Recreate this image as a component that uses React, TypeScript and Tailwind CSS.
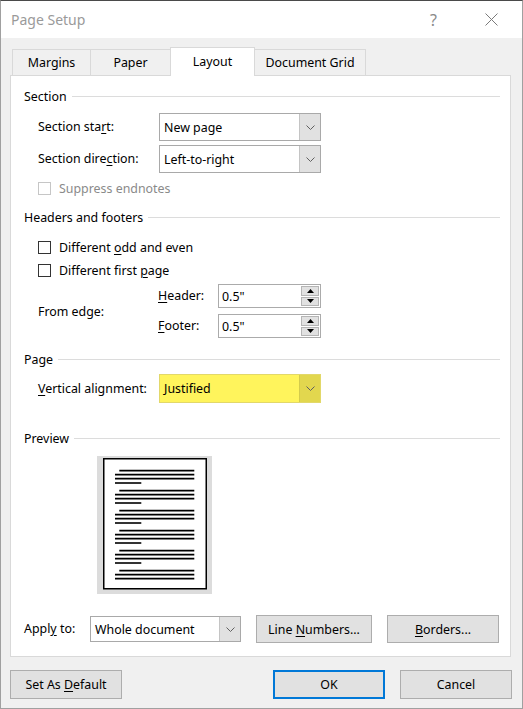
// Page Setup dialog — Layout tab, Word-style classic dialog.

import type { ReactNode } from "react";

function Mn({ children }: { children: ReactNode }) {
  return <span className="underline underline-offset-[2px] decoration-[1px]">{children}</span>;
}

function GroupHeader({ title, className = "" }: { title: string; className?: string }) {
  return (
    <div className={`flex h-[16px] items-center gap-[5px] ${className}`}>
      <span className="pt-[1px] leading-[16px]">{title}</span>
      <div className="h-px flex-1 bg-[#dcdcdc]" />
    </div>
  );
}

function Chevron() {
  return (
    <svg width="9" height="5" viewBox="0 0 9 5" fill="none">
      <polyline points="0.5,0.5 4.5,4.5 8.5,0.5" stroke="#606060" strokeWidth="1" />
    </svg>
  );
}

function Combo({
  value,
  className = "",
  yellow = false,
}: {
  value: string;
  className?: string;
  yellow?: boolean;
}) {
  return (
    <div
      className={`flex border ${
        yellow ? "border-[#e2d86a] bg-[#fff45c]" : "border-[#a9a9a9] bg-white"
      } ${className}`}
    >
      <div className="flex flex-1 items-center pl-[4px] pt-[1px] leading-[16px]">{value}</div>
      <div
        className={`flex w-[21px] items-center justify-center border-l ${
          yellow ? "border-[#d4cb4c] bg-[#e2d74e]" : "border-[#c4c4c4] bg-[#e1e1e1]"
        }`}
      >
        <Chevron />
      </div>
    </div>
  );
}

function Checkbox({ label, disabled = false }: { label: ReactNode; disabled?: boolean }) {
  return (
    <div className="flex h-[16px] items-center pl-[14px]">
      <div
        className={`h-[13px] w-[13px] border bg-white ${
          disabled ? "border-[#c6c6c6]" : "border-[#333333]"
        }`}
      />
      <span className={`ml-[8px] pt-[1px] leading-[16px] ${disabled ? "text-[#8a8a8a]" : ""}`}>
        {label}
      </span>
    </div>
  );
}

function Spin({ value }: { value: string }) {
  return (
    <div className="flex h-[24px] w-[103px] border border-[#ababab] bg-white">
      <div className="flex flex-1 items-center pl-[3px] pt-[1px] leading-[16px]">{value}</div>
      <div className="flex w-[19px] flex-col gap-px py-px pr-px">
        <div className="flex flex-1 items-center justify-center border border-[#b5b5b5] bg-[#e1e1e1]">
          <svg width="7" height="4" viewBox="0 0 7 4">
            <polygon points="0,4 7,4 3.5,0" fill="#000" />
          </svg>
        </div>
        <div className="flex flex-1 items-center justify-center border border-[#b5b5b5] bg-[#e1e1e1]">
          <svg width="7" height="4" viewBox="0 0 7 4">
            <polygon points="0,0 7,0 3.5,4" fill="#000" />
          </svg>
        </div>
      </div>
    </div>
  );
}

function Button({
  children,
  className = "",
  primary = false,
}: {
  children: ReactNode;
  className?: string;
  primary?: boolean;
}) {
  return (
    <div
      className={`flex items-center justify-center bg-[#e1e1e1] ${
        primary ? "border-2 border-[#0078d7]" : "border border-[#adadad]"
      } ${className}`}
    >
      <span className="pt-[1px] leading-[16px]">{children}</span>
    </div>
  );
}

function Preview() {
  const groups = [0, 1, 2, 3, 4, 5];
  return (
    <svg width="115" height="138" viewBox="0 0 115 138">
      <rect x="0" y="0" width="115" height="138" fill="#dcdcdc" />
      <rect x="6.75" y="2.75" width="102.5" height="130" fill="#fff" stroke="#000" strokeWidth="1.5" />
      {groups.map((g) => {
        const y = 14.6 + g * 20;
        const last = g === 5;
        return (
          <g key={g} stroke="#000" strokeWidth="1.6">
            <line x1="22.3" y1={y} x2="97.3" y2={y} />
            <line x1="18" y1={y + 4} x2="97.3" y2={y + 4} />
            <line x1="18" y1={y + 8} x2="97.3" y2={y + 8} />
            {!last && <line x1="18" y1={y + 12.4} x2="44.3" y2={y + 12.4} />}
          </g>
        );
      })}
    </svg>
  );
}

const tabBase = "flex items-center justify-center border border-b-0 border-[#d9d9d9] pt-[1px]";

export default function App() {
  return (
    <div className="flex h-[709px] w-[523px] flex-col border border-[#a0a0a0] border-t-[#4a4a4a] bg-[#f0f0f0] font-['Noto_Sans',sans-serif] text-[12.4px] text-black">
      {/* title bar */}
      <div className="flex h-[37px] shrink-0 items-center bg-white pl-[10px]">
        <span className="pt-[1px] text-[14px] leading-none text-[#9a9a9a]">Page Setup</span>
        <div className="flex-1" />
        <span className="mr-[48px] text-[16px] leading-none text-[#8a8a8a]">?</span>
        <svg width="13" height="13" viewBox="0 0 13 13" className="mr-[24px]">
          <line x1="0.5" y1="0.5" x2="12.5" y2="12.5" stroke="#7a7a7a" strokeWidth="1" />
          <line x1="12.5" y1="0.5" x2="0.5" y2="12.5" stroke="#7a7a7a" strokeWidth="1" />
        </svg>
      </div>

      <div className="flex flex-col pl-[9px] pt-[9px]">
        {/* tabs */}
        <div className="flex h-[28px] items-end pl-[2px]">
          <div className={`${tabBase} h-[26px] w-[79px]`}>Margins</div>
          <div className={`${tabBase} -ml-px h-[26px] w-[81px]`}>Paper</div>
          <div className={`${tabBase} relative z-10 -mb-px -ml-px h-[29px] w-[85px] bg-white`}>
            Layout
          </div>
          <div className={`${tabBase} -ml-px h-[26px] w-[112px]`}>Document Grid</div>
        </div>

        {/* panel */}
        <div className="flex h-[582px] w-[501px] flex-col border border-[#d9d9d9] bg-white pl-[13px] pr-[10px] pt-[12px]">
          <GroupHeader title="Section" />

          <div className="mt-[9px] flex h-[28px] items-center">
            <div className="w-[135px] pl-[14px] pt-[1px]">
              Section sta<Mn>r</Mn>t:
            </div>
            <Combo value="New page" className="h-[28px] w-[162px]" />
          </div>
          <div className="mt-[4px] flex h-[28px] items-center">
            <div className="w-[135px] pl-[14px] pt-[1px]">
              Section dire<Mn>c</Mn>tion:
            </div>
            <Combo value="Left-to-right" className="h-[28px] w-[162px]" />
          </div>

          <div className="mt-[7px]">
            <Checkbox label="Suppress endnotes" disabled />
          </div>

          <GroupHeader title="Headers and footers" className="mt-[13px]" />

          <div className="mt-[14px]">
            <Checkbox
              label={
                <>
                  Different <Mn>o</Mn>dd and even
                </>
              }
            />
          </div>
          <div className="mt-[7px]">
            <Checkbox
              label={
                <>
                  Different first <Mn>p</Mn>age
                </>
              }
            />
          </div>

          <div className="mt-[6px] flex h-[54px] items-center">
            <div className="w-[134px] pl-[14px] pt-[2px]">From edge:</div>
            <div className="flex flex-col gap-[6px]">
              <div className="flex h-[24px] items-center">
                <div className="w-[60px] pt-[1px]">
                  <Mn>H</Mn>eader:
                </div>
                <Spin value={'0.5"'} />
              </div>
              <div className="flex h-[24px] items-center">
                <div className="w-[60px] pt-[1px]">
                  <Mn>F</Mn>ooter:
                </div>
                <Spin value={'0.5"'} />
              </div>
            </div>
          </div>

          <GroupHeader title="Page" className="mt-[13px]" />

          <div className="mt-[7px] flex h-[29px] items-center">
            <div className="w-[135px] pl-[14px] pt-[2px]">
              <Mn>V</Mn>ertical alignment:
            </div>
            <Combo value="Justified" yellow className="h-[29px] w-[162px]" />
          </div>

          <GroupHeader title="Preview" className="mt-[27px]" />

          <div className="ml-[73px] mt-[10px] h-[138px] w-[115px]">
            <Preview />
          </div>

          <div className="mt-[21px] flex h-[28px] items-center">
            <div className="w-[66px] pt-[1px]">
              Appl<Mn>y</Mn> to:
            </div>
            <Combo value="Whole document" className="h-[26px] w-[151px]" />
            <Button className="ml-[15px] h-[28px] w-[116px]">
              Line <Mn>N</Mn>umbers...
            </Button>
            <Button className="ml-[15px] h-[28px] w-[112px]">
              <Mn>B</Mn>orders...
            </Button>
          </div>
        </div>

        {/* bottom buttons */}
        <div className="mt-[13px] flex h-[29px]">
          <Button className="h-[29px] w-[112px]">
            Set As <Mn>D</Mn>efault
          </Button>
          <Button primary className="ml-[151px] h-[29px] w-[112px]">
            OK
          </Button>
          <Button className="ml-[15px] h-[29px] w-[112px]">Cancel</Button>
        </div>
      </div>
    </div>
  );
}
